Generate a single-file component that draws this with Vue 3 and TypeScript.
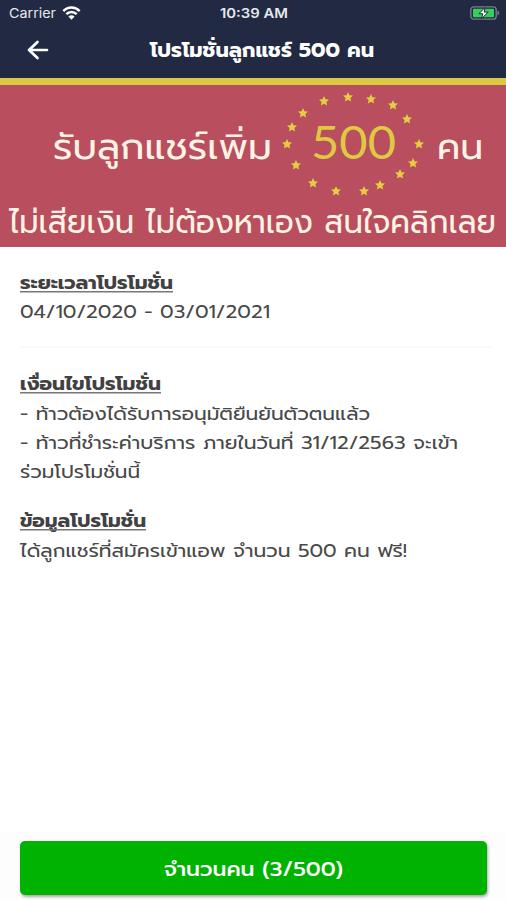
<script setup lang="ts">
interface Line { text: string; width: number; heading?: boolean; height: number }

const period: Line[] = [
  { text: 'ระยะเวลาโปรโมชั่น', width: 153, heading: true, height: 29 },
  { text: '04/10/2020 - 03/01/2021', width: 250, height: 30 },
]
const groups: Line[][] = [
  [
    { text: 'เงื่อนไขโปรโมชั่น', width: 141, heading: true, height: 30 },
    { text: '- ท้าวต้องได้รับการอนุมัติยืนยันตัวตนแล้ว', width: 350, height: 29 },
    { text: '- ท้าวที่ชำระค่าบริการ ภายในวันที่ 31/12/2563 จะเข้า', width: 438, height: 29 },
    { text: 'ร่วมโปรโมชั่นนี้', width: 120, height: 29 },
  ],
  [
    { text: 'ข้อมูลโปรโมชั่น', width: 126, heading: true, height: 30 },
    { text: 'ได้ลูกแชร์ที่สมัครเข้าแอพ จำนวน 500 คน ฟรี!', width: 387, height: 29 },
  ],
]
const sections: Line[][] = [period, ...groups]

const stars: [number, number][] = [
  [348, 19], [371, 21], [393, 27], [407, 41], [419, 66], [413, 85], [400, 96], [380, 107],
  [364, 113], [336, 113], [313, 105], [296, 87], [287, 66], [292, 49], [303, 35], [324, 23],
]
</script>

<template>
  <main class="screen">
    <header class="header">
      <div class="status">
        <div class="carrier">
          <svg width="47" height="20"><text x="0" y="14" textLength="47" lengthAdjust="spacingAndGlyphs">Carrier</text></svg>
          <svg class="wifi" width="19" height="15" viewBox="0 0 19 15">
            <path d="M1.3 5.1C6 .3 13 .3 17.7 5.1M4.3 8.2c3-3 7.400-3 10.400 0" />
            <path class="solid" d="M6.400 10.500c1.800-1.700 4.400-1.700 6.200 0L9.500 13.700z" />
          </svg>
        </div>
        <svg class="time" width="68" height="20"><text x="0" y="14" textLength="68" lengthAdjust="spacingAndGlyphs">10:39 AM</text></svg>
        <svg class="battery" width="30" height="14" viewBox="0 0 30 14">
          <rect class="shell" x=".8" y=".8" width="25.400" height="12.400" rx="3" />
          <path class="cap" d="M27.500 4.500c2.300.7 2.300 4.300 0 5z" />
          <rect class="charge" x="3" y="2.800" width="21" height="8.400" rx="1" />
          <path class="bolt" d="M15.200 1.500 8.800 7.700h4l-1.300 5 6.700-6.600h-4.100z" />
        </svg>
      </div>
      <div class="nav">
        <svg class="back" width="22" height="20" viewBox="0 0 22 20"><path d="M20 10H2M10.500 2 2 10l8.500 8" /></svg>
        <svg class="title" width="224" height="34"><text x="0" y="24" textLength="224" lengthAdjust="spacingAndGlyphs">โปรโมชั่นลูกแชร์ 500 คน</text></svg>
      </div>
    </header>

    <section class="banner">
      <svg width="506" height="169" viewBox="0 0 506 169">
        <g class="lettering">
          <text x="53" y="81" textLength="219" lengthAdjust="spacingAndGlyphs">รับลูกแชร์เพิ่ม</text>
          <text x="437" y="81" textLength="46" lengthAdjust="spacingAndGlyphs">คน</text>
          <text class="second" x="9" y="155" textLength="487" lengthAdjust="spacingAndGlyphs">ไม่เสียเงิน ไม่ต้องหาเอง สนใจคลิกเลย</text>
        </g>
        <text class="amount" x="311" y="81" textLength="85" lengthAdjust="spacingAndGlyphs">500</text>
        <path
          v-for="([x, y], i) in stars" :key="i" class="star"
          :transform="`translate(${x} ${y})`"
          d="M0-5 1.500-1.700 5-1.400 2.400.9 3.100 4.500 0 2.700-3.100 4.500-2.400.9-5-1.400-1.500-1.700z"
        />
      </svg>
    </section>

    <article class="content">
      <section v-for="(lines, s) in sections" :key="s" class="section">
        <svg v-for="line in lines" :key="line.text" class="line" :class="{ heading: line.heading }" :width="line.width" :height="line.height">
          <text x="0" y="21" :textLength="line.width" lengthAdjust="spacingAndGlyphs">{{ line.text }}</text>
          <rect v-if="line.heading" x="0" y="23" :width="line.width" height="1.500" />
        </svg>
      </section>
    </article>

    <footer class="footer">
      <button class="action" type="button">
        <svg width="179" height="34"><text x="0" y="25" textLength="179" lengthAdjust="spacingAndGlyphs">จำนวนคน (3/500)</text></svg>
      </button>
    </footer>
  </main>
</template>

<style>
body { margin: 0; background: #fff; }
</style>

<style scoped>
.screen {
  width: 506px;
  height: 900px;
  display: flex;
  flex-direction: column;
  overflow: hidden;
  background: #fff;
  font-family: Prompt, Kanit, "Noto Sans Thai", "Noto Sans", "Open Sans", sans-serif;
}
svg { display: block; overflow: visible; }
.header { height: 78px; flex: none; background: #212a42; color: #fff; }
.status {
  height: 26px;
  box-sizing: border-box;
  padding: 0 6px 0 9px;
  display: grid;
  grid-template-columns: 211px 1fr auto;
  align-items: center;
  font: 13px Inter, sans-serif;
}
.status text { fill: #e6e8ec; }
.carrier { display: flex; align-items: center; gap: 6px; }
.carrier svg:first-child, .time { margin-top: 2px; }
.time { font-weight: 600; }
.wifi path { fill: none; stroke: #fff; stroke-width: 2.4; }
.wifi .solid { fill: #fff; stroke: none; }
.shell { fill: none; stroke: #788087; stroke-width: 1.3; }
.cap { fill: #788087; }
.charge { fill: #35d058; }
.bolt { fill: #fff; stroke: #212a42; stroke-width: 1; }
.nav {
  height: 48px;
  padding: 0 27px;
  display: grid;
  grid-template-columns: 123px 1fr;
  align-items: center;
}
.back path { fill: none; stroke: #fff; stroke-width: 2.7; stroke-linecap: round; stroke-linejoin: round; }
.title { font-size: 20px; font-weight: 700; fill: #fff; }
.banner { height: 162px; flex: none; border-top: 7px solid #d9ca42; background: #b84e5e; }
.banner svg { margin-top: -7px; }
.lettering { fill: #fff3e5; font-size: 37px; }
.second { font-size: 33px; }
.amount { fill: #dfc842; font: 46px Lato, sans-serif; }
.star { fill: #e4cd42; }
.content { flex: 1; padding: 21px 15px 0 20px; color: #444; }
.section + .section { padding-top: 20px; }
.section:first-child { padding-bottom: 19px; border-bottom: 2px solid #fafafa; }
.section:nth-child(2) { padding-top: 21px; }
.line { fill: #484848; font-size: 18.5px; }
.line.heading { font-weight: 700; fill: #414141; }
.line rect { fill: #777; }
.footer { height: 67px; flex: none; padding: 8px 19px 0 20px; box-sizing: border-box; background: #fdfdfd; }
.action {
  width: 100%;
  height: 54px;
  padding: 0;
  border: 0;
  border-radius: 5px;
  display: grid;
  place-items: center;
  background: #00b300;
  box-shadow: 1px 2px 3px #0005;
  font-family: inherit;
  font-size: 20px;
  font-weight: 500;
}
.action text { fill: #fff; }
</style>
